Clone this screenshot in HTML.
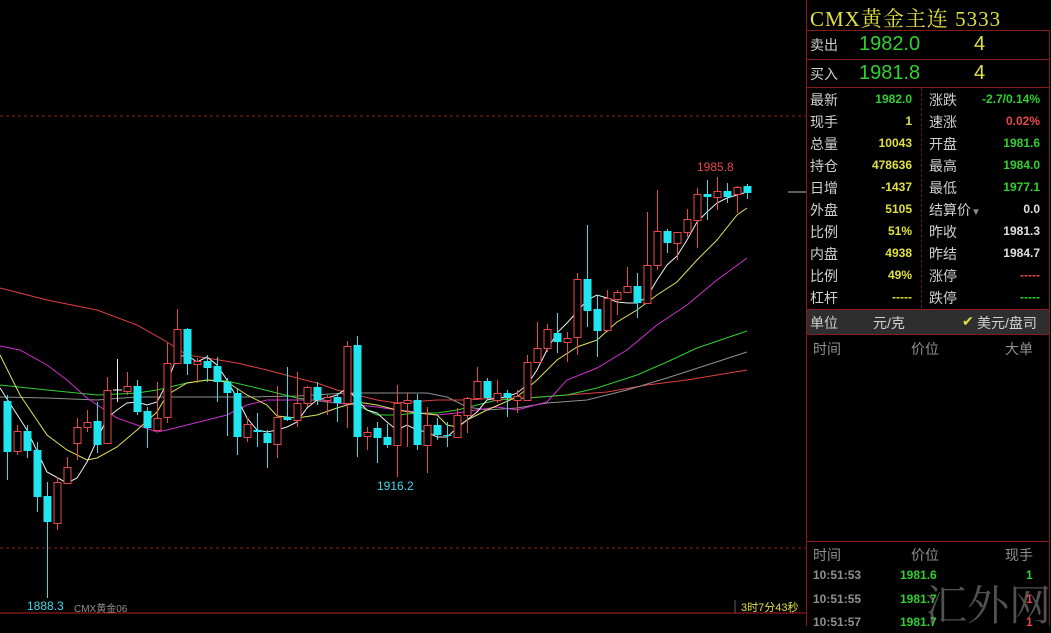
<!DOCTYPE html>
<html><head><meta charset="utf-8"><style>
body{margin:0;width:1051px;height:626px;background:#000;overflow:hidden;position:relative;font-family:"Liberation Sans","Noto Sans CJK SC",sans-serif}
.p{position:absolute;left:806px;top:0;width:245px;height:626px;border-left:1px solid #8a1a1a}
.t{position:absolute;white-space:nowrap}
.lb{color:#d0d0d0;font-size:14px}
.v{font-size:12px;font-weight:bold;text-align:right}
.hl{position:absolute;left:0;width:242px;height:1px;background:#8a1a1a}
</style></head><body>
<svg width="806" height="626" style="position:absolute;left:0;top:0">
<line x1="0" y1="116" x2="806" y2="116" stroke="#8a2020" stroke-dasharray="3,3"/>
<line x1="0" y1="548" x2="806" y2="548" stroke="#8a2020" stroke-dasharray="3,3"/>
<line x1="0" y1="613" x2="806" y2="613" stroke="#b02020"/>
<line x1="788" y1="192" x2="806" y2="192" stroke="#c0c0c0"/>
<line x1="735" y1="600" x2="735" y2="613" stroke="#606060"/>
<g fill="none" stroke-width="1">
<polyline stroke="#e04040" points="0,288 47,300 97,310 137,325 167,342 187,355 207,358 237,363 267,370 297,378 317,383 337,390 357,395 377,400 397,403 437,400 467,400 497,398 527,398 567,395 607,392 647,385 687,380 747,370"/>
<polyline stroke="#909090" points="0,397 47,398 97,400 137,397 187,397 247,397 297,396 347,393 397,393 427,393 447,397 467,407 487,410 517,408 547,403 587,400 627,390 667,378 707,365 747,352"/>
<polyline stroke="#30d030" points="0,385 47,390 97,395 137,393 157,390 187,383 207,380 227,381 257,388 297,398 327,402 357,405 377,415 397,415 417,413 437,413 457,410 477,405 497,400 527,398 567,395 597,388 637,375 667,362 697,348 747,331"/>
<polyline stroke="#d030d0" points="0,346 20,350 47,365 67,380 87,398 117,418 137,425 157,432 167,430 187,425 207,420 227,415 247,405 267,400 297,400 317,400 337,403 357,405 377,407 397,410 417,412 437,415 457,413 477,410 497,407 517,410 547,402 567,380 597,368 627,350 657,325 687,305 717,280 747,258"/>
<polyline stroke="#e0e060" points="0,355 20,395 47,435 67,450 87,460 97,458 117,447 137,430 157,412 167,395 187,383 207,380 227,382 247,395 267,405 277,416 297,418 317,415 337,408 357,402 377,405 397,410 417,413 437,415 447,425 457,427 467,420 487,410 517,397 537,380 557,360 577,347 597,340 617,322 637,310 657,295 677,282 697,260 717,240 737,215 747,208"/>
<polyline stroke="#f0f0f0" points="0,388 27,430 47,472 67,483 77,478 87,462 97,440 107,418 117,410 127,403 137,402 147,405 157,402 167,383 177,357 187,355 197,362 207,357 217,365 227,380 237,398 247,418 257,430 267,432 277,430 287,427 297,422 307,408 317,400 327,398 337,395 347,388 357,400 367,410 377,413 387,422 397,430 407,425 417,430 427,432 437,437 447,437 457,428 467,420 477,412 487,400 497,398 507,397 517,393 527,385 537,370 547,350 557,333 567,323 577,312 587,300 597,295 607,298 617,302 627,303 637,303 647,297 657,280 667,265 677,256 687,240 697,222 707,212 717,203 727,198 737,195 747,192"/>
</g>
<g id="c"></g>
</svg>
<script>
var d=[[7,'c',401,452,395,480],[17,'r',431,451,425,455],[27,'c',431,451,425,458],[37,'c',450,497,442,512],[47,'c',496,522,482,598],[57,'r',482,523,477,530],[67,'r',467,483,457,483],[77,'r',427,443,418,460],[87,'r',422,427,410,432],[97,'c',421,445,402,453],[107,'r',390,443,377,444],[117,'w',390,391,359,402],[127,'r',386,391,372,395],[137,'c',386,412,380,415],[147,'c',411,428,407,448],[157,'r',418,430,382,430],[167,'r',363,417,343,423],[177,'r',329,363,309,363],[187,'c',329,364,328,375],[197,'r',361,364,358,383],[207,'c',361,368,355,382],[217,'c',366,382,357,402],[227,'c',382,393,378,436],[237,'c',393,437,388,455],[247,'r',424,437,418,442],[257,'c',430,432,413,447],[267,'c',433,443,430,468],[277,'r',417,444,386,458],[287,'c',417,420,367,421],[297,'r',403,420,372,427],[307,'r',387,403,386,407],[317,'c',387,400,382,405],[327,'r',397,400,395,415],[337,'c',397,403,393,422],[347,'r',346,403,341,428],[357,'c',345,437,336,457],[367,'r',432,436,427,450],[377,'c',428,438,422,463],[387,'c',437,445,424,448],[397,'r',403,445,385,477],[407,'r',400,403,393,447],[417,'c',400,445,394,450],[427,'r',425,445,407,473],[437,'c',425,435,418,440],[447,'c',435,436,422,447],[457,'r',415,437,408,437],[467,'r',398,415,397,433],[477,'r',381,398,367,400],[487,'c',381,398,378,400],[497,'r',393,400,380,403],[507,'c',393,398,390,417],[517,'r',396,400,390,413],[527,'r',362,400,355,400],[537,'r',348,362,322,363],[547,'r',329,348,324,352],[557,'c',333,342,313,353],[567,'r',338,342,332,362],[577,'r',279,337,273,355],[587,'c',279,311,225,327],[597,'c',309,331,295,357],[607,'r',298,330,290,332],[617,'r',292,299,290,315],[627,'r',286,292,267,293],[637,'c',286,303,273,318],[647,'r',265,303,212,303],[657,'r',231,265,190,270],[667,'c',231,243,229,253],[677,'r',232,243,232,260],[687,'r',219,232,209,237],[697,'r',194,220,188,248],[707,'c',194,197,180,220],[717,'r',191,197,177,210],[727,'c',191,197,183,203],[737,'r',187,194,186,213],[747,'c',186,193,184,199]];
var s='';d.forEach(function(a){var x=a[0],col=a[1]=='c'?'#20e4ee':a[1]=='r'?'#e84848':'#f0f0f0';
s+='<line x1="'+(x+.5)+'" y1="'+a[4]+'" x2="'+(x+.5)+'" y2="'+a[5]+'" stroke="'+col+'"/>';
var h=Math.max(1,a[3]-a[2]);
if(a[1]=='c')s+='<rect x="'+(x-3.5)+'" y="'+a[2]+'" width="8" height="'+h+'" fill="'+col+'"/>';
else if(a[1]=='r')s+='<rect x="'+(x-3)+'" y="'+(a[2]+.5)+'" width="7" height="'+h+'" fill="#000" stroke="'+col+'"/>';
else s+='<line x1="'+(x-4)+'" y1="'+a[2]+'" x2="'+(x+5)+'" y2="'+a[2]+'" stroke="'+col+'"/>';});
document.getElementById('c').innerHTML=s;
</script>
<div class="t" style="left:697px;top:160px;color:#e84848;font-size:12px">1985.8</div>
<div class="t" style="left:377px;top:479px;color:#40d8e8;font-size:12px">1916.2</div>
<div class="t" style="left:27px;top:599px;color:#40d8e8;font-size:12px">1888.3</div>
<div class="t" style="left:74px;top:600px;color:#909090;font-size:10px">CMX黄金06</div>
<div class="t" style="left:741px;top:599px;color:#e0e040;font-size:11px">3时7分43秒</div>

<div class="p">
<div class="t" style="left:3px;top:3px;color:#e0e040;font-size:21px;letter-spacing:1px;font-family:'Liberation Serif','Noto Serif CJK SC',serif">CMX黄金主连 5333</div>
<div class="hl" style="top:30px"></div>
<div class="t lb" style="left:3px;top:35px">卖出</div>
<div class="t" style="left:52px;top:33px;color:#30d030;font-size:20px">1982.0</div>
<div class="t" style="left:167px;top:33px;color:#e0e040;font-size:20px">4</div>
<div class="hl" style="top:59px"></div>
<div class="t lb" style="left:3px;top:64px">买入</div>
<div class="t" style="left:52px;top:62px;color:#30d030;font-size:20px">1981.8</div>
<div class="t" style="left:167px;top:62px;color:#e0e040;font-size:20px">4</div>
<div class="hl" style="top:87px"></div>
<div style="position:absolute;left:114px;top:88px;height:220px;border-left:1px dashed #6a1a1a"></div>
<div id="g"></div>
<div style="position:absolute;left:0;top:309px;width:242px;height:24px;background:#2e2e2e;border-top:1px solid #8a1a1a;border-bottom:1px solid #8a1a1a"></div>
<div class="t lb" style="left:3px;top:313px">单位</div>
<div class="t lb" style="left:66px;top:313px">元/克</div>
<div class="t" style="left:155px;top:313px;color:#e0e040;font-size:14px">✔</div>
<div class="t lb" style="left:170px;top:313px">美元/盘司</div>
<div class="t" style="left:6px;top:339px;color:#909090;font-size:14px">时间</div>
<div class="t" style="left:104px;top:339px;color:#909090;font-size:14px">价位</div>
<div class="t" style="left:198px;top:339px;color:#909090;font-size:14px">大单</div>
<div class="hl" style="top:541px"></div>
<div class="t" style="left:6px;top:545px;color:#909090;font-size:14px">时间</div>
<div class="t" style="left:104px;top:545px;color:#909090;font-size:14px">价位</div>
<div class="t" style="left:198px;top:545px;color:#909090;font-size:14px">现手</div>
<div class="t" style="left:6px;top:568px;color:#909090;font-size:12px;font-weight:bold">10:51:53</div>
<div class="t" style="left:93px;top:568px;color:#30d030;font-size:12px;font-weight:bold">1981.6</div>
<div class="t" style="left:219px;top:568px;color:#30d030;font-size:12px;font-weight:bold">1</div>
<div class="t" style="left:6px;top:592px;color:#909090;font-size:12px;font-weight:bold">10:51:55</div>
<div class="t" style="left:93px;top:592px;color:#30d030;font-size:12px;font-weight:bold">1981.7</div>
<div class="t" style="left:219px;top:592px;color:#e84848;font-size:12px;font-weight:bold">1</div>
<div class="t" style="left:6px;top:615px;color:#909090;font-size:12px;font-weight:bold">10:51:57</div>
<div class="t" style="left:93px;top:615px;color:#30d030;font-size:12px;font-weight:bold">1981.7</div>
<div class="t" style="left:219px;top:615px;color:#e84848;font-size:12px;font-weight:bold">1</div>
<div class="t" style="left:118px;top:573px;color:rgba(150,150,150,0.55);font-size:42px;font-family:'Noto Serif CJK SC',serif">汇外网</div>
<div style="position:absolute;left:242px;top:30px;height:596px;border-left:1px solid #8a1a1a"></div>
</div>
<script>
var L=[['最新','1982.0','#30d030','涨跌','-2.7/0.14%','#30d030'],['现手','1','#e0e040','速涨','0.02%','#e84848'],['总量','10043','#e0e040','开盘','1981.6','#30d030'],['持仓','478636','#e0e040','最高','1984.0','#30d030'],['日增','-1437','#e0e040','最低','1977.1','#30d030'],['外盘','5105','#e0e040','结算价<span style="color:#888;font-size:10px">▼</span>','0.0','#e0e0e0'],['比例','51%','#e0e040','昨收','1981.3','#e0e0e0'],['内盘','4938','#e0e040','昨结','1984.7','#e0e0e0'],['比例','49%','#e0e040','涨停','-----','#e84848'],['杠杆','-----','#e0e040','跌停','-----','#30d030']];
var h='';L.forEach(function(r,i){var y=90+i*22;
h+='<div class="t lb" style="left:3px;top:'+y+'px">'+r[0]+'</div><div class="t v" style="right:140px;top:'+(y+2)+'px;color:'+r[2]+'">'+r[1]+'</div><div class="t lb" style="left:122px;top:'+y+'px">'+r[3]+'</div><div class="t v" style="right:12px;top:'+(y+2)+'px;color:'+r[5]+'">'+r[4]+'</div>';});
document.getElementById('g').innerHTML=h;
</script>
</body></html>
